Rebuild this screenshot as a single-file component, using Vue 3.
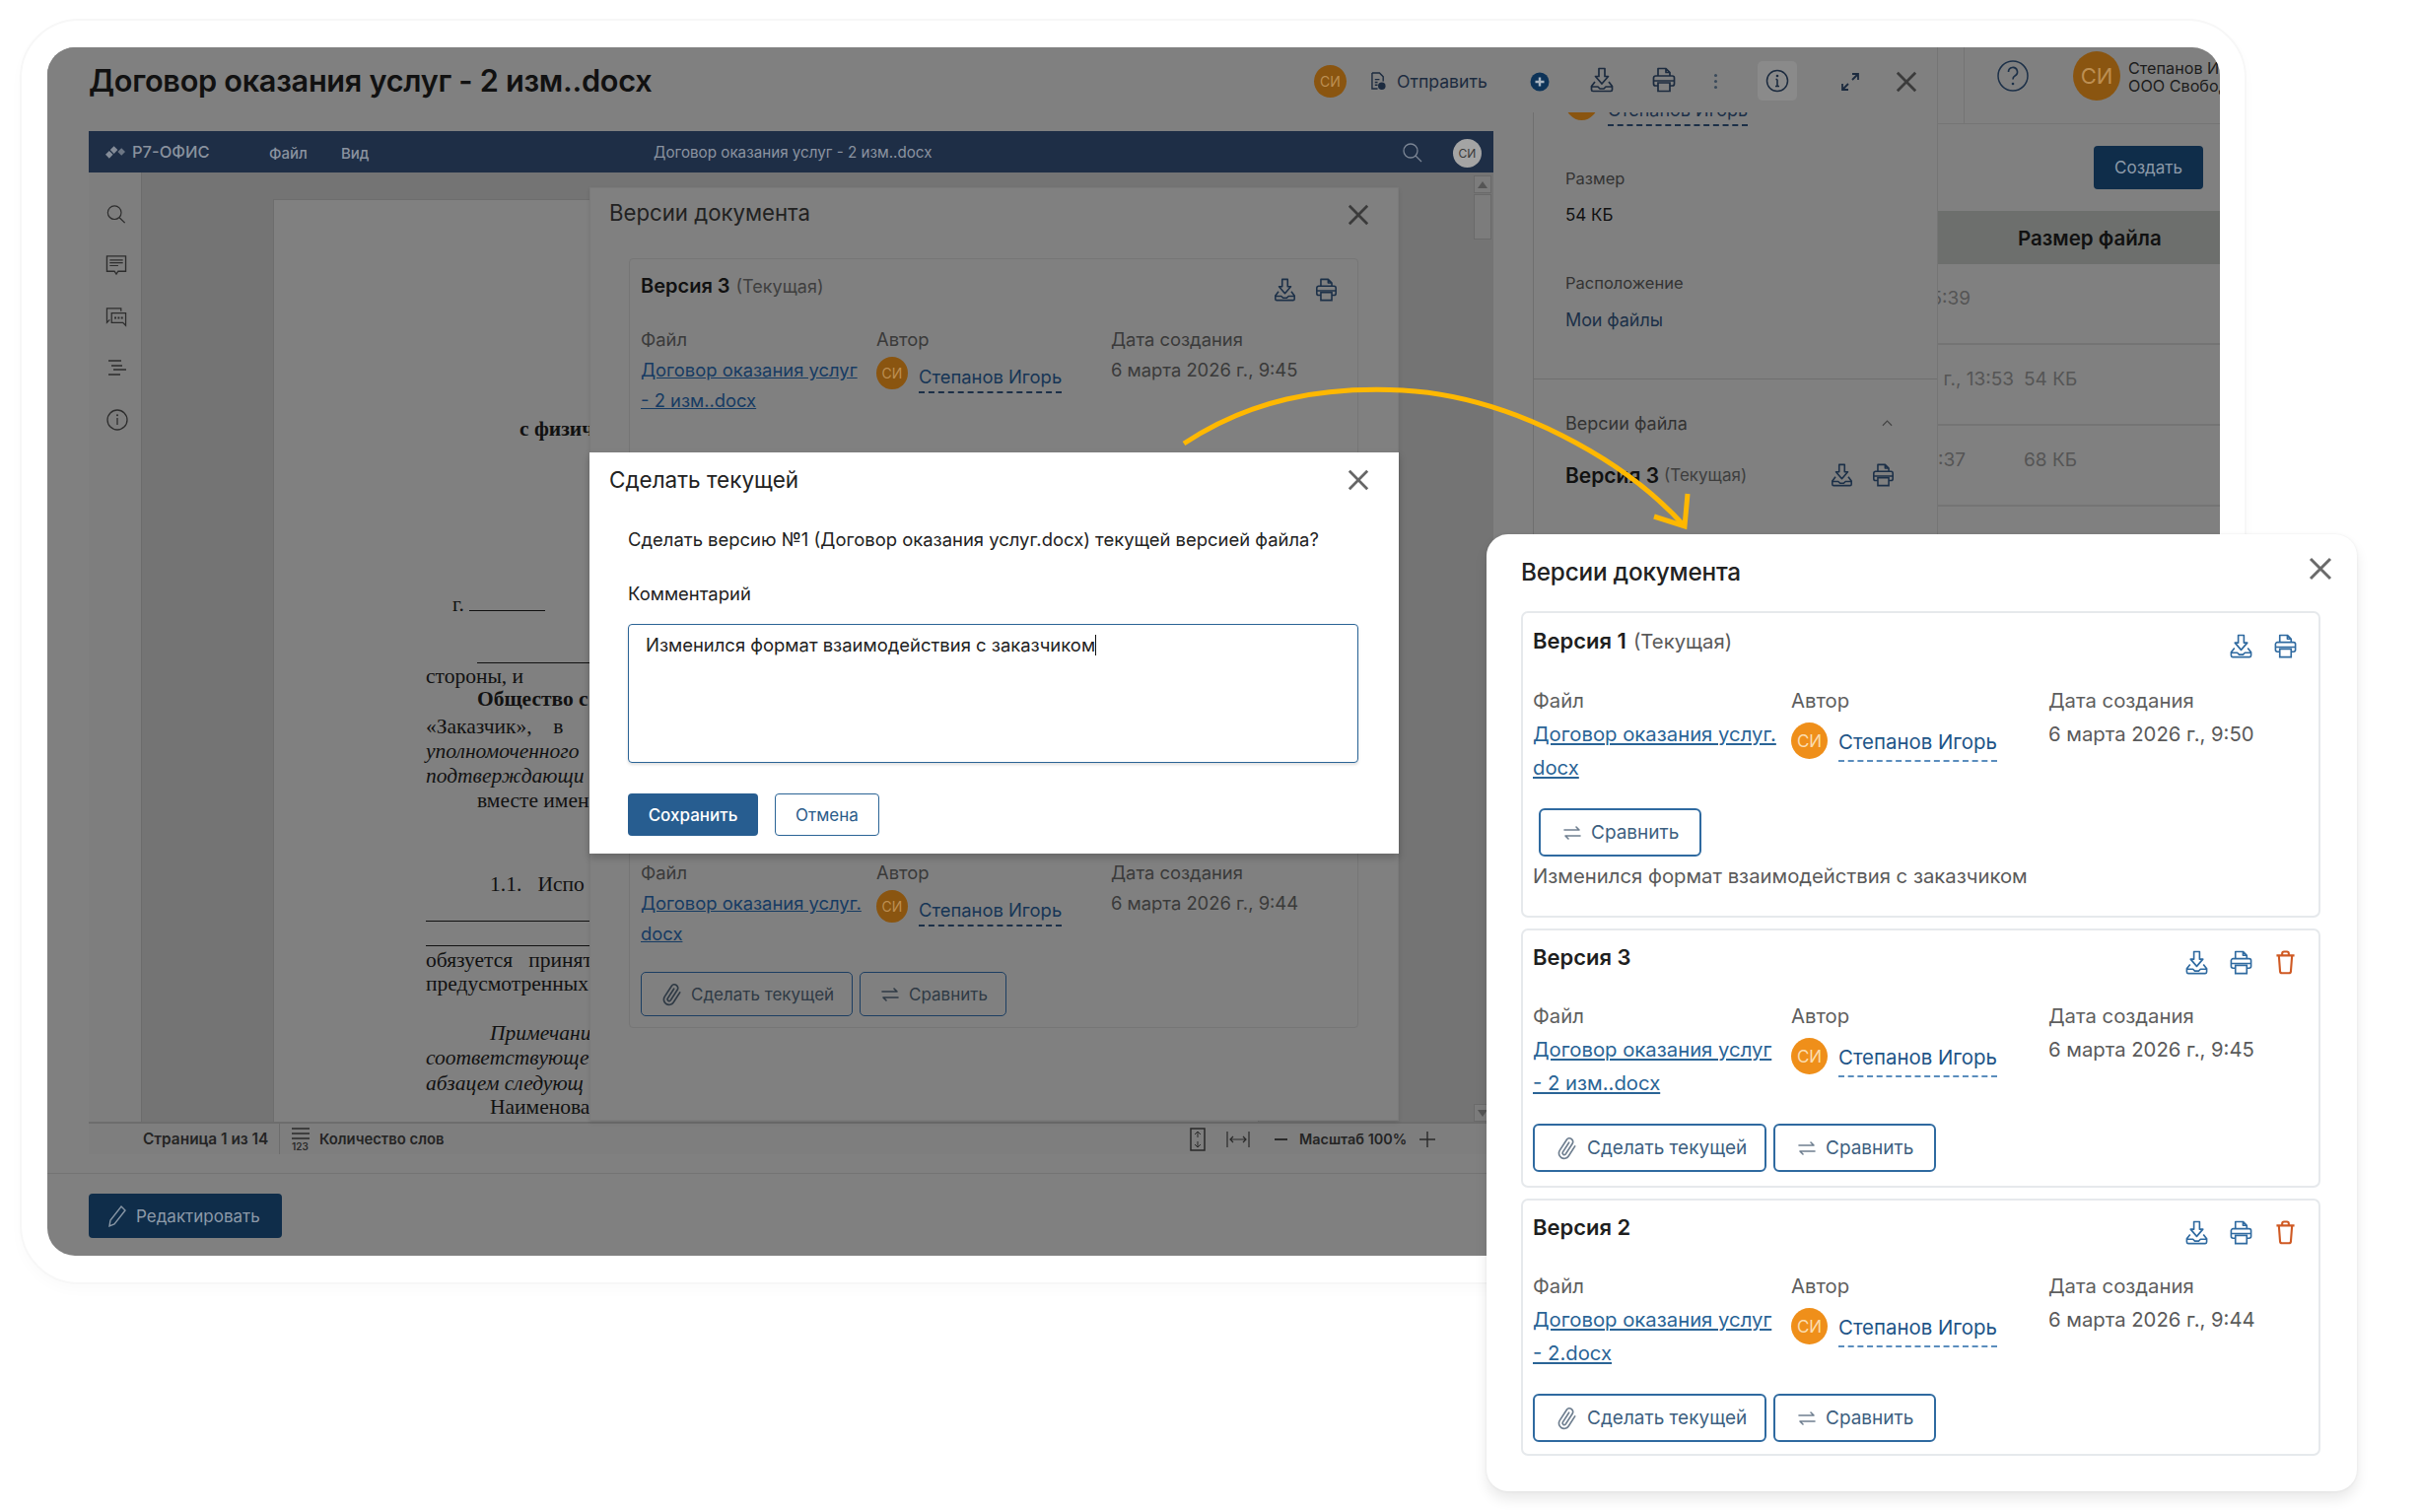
<script setup>
const docLines = [
  { y: 435, x: 527, text: 'с физич', cls: 'b' },
  { y: 613, x: 459, text: 'г. ', rule: 77 },
  { y: 666, x: 484, text: '', rule: 114 },
  { y: 686, x: 432, text: 'стороны, и' },
  { y: 709, x: 484, text: 'Общество с', cls: 'b' },
  { y: 737, x: 432, text: '«Заказчик»,\u00a0\u00a0\u00a0\u00a0в' },
  { y: 762, x: 432, text: 'уполномоченного', cls: 'i' },
  { y: 787, x: 432, text: 'подтверждающи', cls: 'i' },
  { y: 812, x: 484, text: 'вместе имен' },
  { y: 897, x: 497, text: '1.1.\u00a0\u00a0\u00a0Испо' },
  { y: 928, x: 432, text: '', rule: 166 },
  { y: 953, x: 432, text: '', rule: 166 },
  { y: 974, x: 432, text: 'обязуется\u00a0\u00a0\u00a0принять' },
  { y: 998, x: 432, text: 'предусмотренных' },
  { y: 1048, x: 497, text: 'Примечание', cls: 'i' },
  { y: 1073, x: 432, text: 'соответствующе', cls: 'i' },
  { y: 1099, x: 432, text: 'абзацем следующ', cls: 'i' },
  { y: 1123, x: 497, text: 'Наименова' },
].map((l, i, a) => ({
  ...l,
  mt: l.y - (i ? a[i - 1].y : 203 + 12) - (i ? 25 : 0),
  pl: l.x - 278,
}))

const versions = [
  { id: 'Версия 1', cur: true, file: ['Договор оказания услуг.', 'docx'], date: '6 марта 2026 г., 9:50', comment: 'Изменился формат взаимодействия с заказчиком', cls: 'first' },
  { id: 'Версия 3', file: ['Договор оказания услуг', '- 2 изм..docx'], date: '6 марта 2026 г., 9:45', cls: 'second' },
  { id: 'Версия 2', file: ['Договор оказания услуг', '- 2.docx'], date: '6 марта 2026 г., 9:44', cls: 'third' },
]

const rows = [
  { t: '6 марта 2026 г., 15:39', s: '', pr: 54 },
  { t: '6 марта 2026 г., 13:53', s: '54 КБ', pr: 10 },
  { t: '6 марта 2026 г., 11:37', s: '68 КБ', pr: 59 },
]
</script>

<template>
  <div class="canvas">
    <svg class="defs" width="0" height="0" aria-hidden="true">
      <defs>
        <symbol id="i-dl" viewBox="0 0 24 26">
          <path d="M9 1.500h6v8h3.500L12 17 5.500 9.500H9z" fill="none" stroke="currentColor" stroke-width="1.700" stroke-linejoin="round"/>
          <path d="M5 15 1.500 19.500v3.500a1.500 1.500 0 0 0 1.500 1.500h18a1.500 1.500 0 0 0 1.500-1.500v-3.500L19 15M2 20h6l2 2h4l2-2h6" fill="none" stroke="currentColor" stroke-width="1.700" stroke-linejoin="round"/>
        </symbol>
        <symbol id="i-pr" viewBox="0 0 24 26">
          <path d="M6 9V1.500h8l4 4V9M14 1.500v4h4" fill="none" stroke="currentColor" stroke-width="1.700" stroke-linejoin="round"/>
          <path d="M6 19H3.500a2 2 0 0 1-2-2v-6a2 2 0 0 1 2-2h17a2 2 0 0 1 2 2v6a2 2 0 0 1-2 2H18M1.500 14h21" fill="none" stroke="currentColor" stroke-width="1.700"/>
          <path d="M6 16h12v8.500H6z" fill="none" stroke="currentColor" stroke-width="1.700"/>
        </symbol>
        <symbol id="i-tr" viewBox="0 0 22 26">
          <path d="M1.500 5.500h19M7.500 5.500v-2a2 2 0 0 1 2-2h3a2 2 0 0 1 2 2v2M4 5.500l1.300 17a2 2 0 0 0 2 1.800h7.400a2 2 0 0 0 2-1.800l1.300-17" fill="none" stroke="currentColor" stroke-width="2.200" stroke-linejoin="round"/>
        </symbol>
        <symbol id="i-clip" viewBox="0 0 24 24">
          <path d="M20 11.500 11.500 20a5.300 5.300 0 0 1-7.500-7.500l9-9a3.500 3.500 0 0 1 5 5l-9 9a1.800 1.800 0 0 1-2.500-2.500l8.300-8.300" fill="none" stroke="currentColor" stroke-width="1.700" stroke-linecap="round"/>
        </symbol>
        <symbol id="i-sw" viewBox="0 0 20 16">
          <path d="M2 5h15l-3-3M18 11H3l3 3" fill="none" stroke="currentColor" stroke-width="1.600" stroke-linecap="round" stroke-linejoin="round"/>
        </symbol>
        <symbol id="i-x" viewBox="0 0 24 24">
          <path d="M2 2l20 20M22 2 2 22" fill="none" stroke="currentColor" stroke-width="3"/>
        </symbol>
      </defs>
    </svg>

    <div class="frame">
      <div class="window">
        <div class="left">
          <header class="top">
            <h1 class="doc-title">Договор оказания услуг - 2 изм..docx</h1>
            <span class="av av-top">СИ</span>
            <svg class="send-ic" viewBox="0 0 16 20"><path d="M1 1h8l4 4v5M1 1v17h6M4 8h5M4 11h3M4 14h3" fill="none" stroke="#1c2b3f" stroke-width="1.500"/><circle cx="11.500" cy="15" r="4" fill="#1c2b3f"/></svg>
            <span class="send">Отправить</span>
            <span class="plus">
              <svg viewBox="0 0 20 20"><circle cx="10" cy="10" r="9.500" fill="#0d3358"/><path d="M10 5.500v9M5.500 10h9" stroke="#a8b4c0" stroke-width="2.400"/></svg>
            </span>
            <svg class="tico t-dl"><use href="#i-dl"/></svg>
            <svg class="tico t-pr"><use href="#i-pr"/></svg>
            <span class="dots"><i></i><i></i><i></i></span>
            <span class="info-box">
              <svg viewBox="0 0 24 24"><circle cx="12" cy="12" r="10.500" fill="none" stroke="#1c2b3f" stroke-width="1.500"/><path d="M12 10.500v7M10 17.500h4M10.500 10.500H12" stroke="#1c2b3f" stroke-width="1.600" fill="none"/><circle cx="12" cy="7" r="1.300" fill="#1c2b3f"/></svg>
            </span>
            <svg class="expand" viewBox="0 0 20 20"><path d="M12 2h6v6M18 2l-6 6M8 18H2v-6M2 18l6-6" fill="none" stroke="#1c2b3f" stroke-width="1.800"/></svg>
            <svg class="x-top"><use href="#i-x"/></svg>
          </header>

          <div class="body">
            <div class="editor">
              <div class="bar">
                <svg class="logo" viewBox="0 0 22 16"><path d="M5 6l4-4 4 4-4 4zM0 11l4-4 4 4-4 4z" fill="#848c98"/><path d="M13 8l4-4 4 4-4 4z" fill="#6c7684"/></svg>
                <span class="brand">Р7-ОФИС</span>
                <span class="menu m1">Файл</span>
                <span class="menu m2">Вид</span>
                <span class="bar-title">Договор оказания услуг - 2 изм..docx</span>
                <svg class="bar-search" viewBox="0 0 20 20"><circle cx="8" cy="8" r="7" fill="none" stroke="#7b8594" stroke-width="1.300"/><path d="M13 13l6 6" stroke="#7b8594" stroke-width="1.300"/></svg>
                <span class="bar-av">СИ</span>
              </div>
              <div class="work">
                <aside class="side">
                  <svg viewBox="0 0 22 22" class="s1"><circle cx="9" cy="9" r="7.500" fill="none" stroke="#2d2d2d" stroke-width="1.300"/><path d="M14.500 14.500l6 6" stroke="#2d2d2d" stroke-width="1.500"/></svg>
                  <svg viewBox="0 0 22 22" class="s2"><path d="M1 1h20v16h-8l-2 3-2-3H1z" fill="none" stroke="#2d2d2d" stroke-width="1.400"/><path d="M4 5h14M4 8h14M4 11h9" stroke="#2d2d2d" stroke-width="1.300"/></svg>
                  <svg viewBox="0 0 22 22" class="s3"><path d="M1 13V1h15v3M1 13v3l3-3" fill="none" stroke="#2d2d2d" stroke-width="1.300"/><path d="M6 6h15v13l-3-3H6z" fill="none" stroke="#2d2d2d" stroke-width="1.300"/><path d="M9 11h2M12.500 11h2M16 11h2" stroke="#2d2d2d" stroke-width="2"/></svg>
                  <svg viewBox="0 0 20 16" class="s4"><path d="M1 1h13M4 6h11M6 10h13M1 15h12" stroke="#2d2d2d" stroke-width="1.400"/></svg>
                  <svg viewBox="0 0 22 22" class="s5"><circle cx="11" cy="11" r="10" fill="none" stroke="#2d2d2d" stroke-width="1.300"/><path d="M11 9v7" stroke="#2d2d2d" stroke-width="1.300"/><circle cx="11" cy="6.200" r="1" fill="#2d2d2d"/></svg>
                </aside>
                <div class="space">
                  <div class="page">
                    <div v-for="(l, i) in docLines" :key="i" class="line" :class="l.cls" :style="{ marginTop: l.mt + 'px', paddingLeft: l.pl + 'px' }">
                      {{ l.text }}<span v-if="l.rule" class="rule" :style="{ width: l.rule + 'px' }"></span>
                    </div>
                  </div>
                  <div class="scroll">
                    <span class="sb-btn"><i class="up"></i></span>
                    <span class="sb-thumb"></span>
                    <span class="sb-rest"></span>
                    <span class="sb-btn"><i class="down"></i></span>
                  </div>
                </div>
              </div>
              <div class="status">
                <span class="st-page">Страница 1 из 14</span>
                <span class="st-sep"></span>
                <svg class="st-ic" viewBox="0 0 18 24"><path d="M0 1h18M0 6h18M0 11h18" stroke="#2a2a2a" stroke-width="1.500"/><text x="0" y="23" font-size="10" font-family="Inter, sans-serif" fill="#2a2a2a">123</text></svg>
                <span class="st-words">Количество слов</span>
                <svg class="st-fit" viewBox="0 0 16 24"><path d="M1 1h14v22H1z" fill="none" stroke="#2a2a2a" stroke-width="1.500"/><path d="M8 4v6M8 14v6M5 7l3-3 3 3M5 17l3 3 3-3" fill="none" stroke="#2a2a2a"/></svg>
                <svg class="st-w" viewBox="0 0 24 18"><path d="M1 1v16M23 1v16M4 9h16M7 6 4 9l3 3M17 6l3 3-3 3" fill="none" stroke="#2a2a2a" stroke-width="1.200"/></svg>
                <span class="st-minus"></span>
                <span class="st-zoom">Масштаб 100%</span>
                <svg class="st-plus" viewBox="0 0 16 16"><path d="M8 0v16M0 8h16" stroke="#2a2a2a" stroke-width="1.400"/></svg>
              </div>
            </div>

            <aside class="panel">
              <div class="p-owner">
                <span class="av av-owner"></span>
                <span class="p-name">Степанов Игорь</span>
              </div>
              <div class="p-lab">Размер</div>
              <div class="p-val">54 КБ</div>
              <div class="p-lab p-gap">Расположение</div>
              <a class="p-link">Мои файлы</a>
              <div class="p-div"></div>
              <div class="p-ver"><span>Версии файла</span><svg viewBox="0 0 12 8"><path d="M1 7l5-5 5 5" fill="none" stroke="#444" stroke-width="1.300"/></svg></div>
              <div class="p-vhead">
                <b>Версия 3</b><span>(Текущая)</span>
                <svg class="pico pi1"><use href="#i-dl"/></svg>
                <svg class="pico"><use href="#i-pr"/></svg>
              </div>
            </aside>
          </div>
          <footer class="foot">
            <button class="edit">
              <svg viewBox="0 0 20 24"><path d="M14 2l4 4L7 20l-5 2 1-6z" fill="none" stroke="#8896a5" stroke-width="1.400"/></svg>
              Редактировать
            </button>
          </footer>

          <!-- dimmed «Версии документа» dialog -->
          <section class="dlg-dim">
            <div class="dd-head"><span class="dd-title">Версии документа</span><svg class="dd-x"><use href="#i-x"/></svg></div>
            <div class="dd-card">
              <div class="dd-vh">
                <b>Версия 3</b><span>(Текущая)</span>
                <svg class="pico pi1 dd-ico"><use href="#i-dl"/></svg>
                <svg class="pico dd-ico"><use href="#i-pr"/></svg>
              </div>
              <div class="dd-grid">
                <span class="dl">Файл</span><span class="dl">Автор</span><span class="dl">Дата создания</span>
                <a class="df">Договор оказания услуг<br>- 2 изм..docx</a>
                <div class="da"><span class="av av-dim">СИ</span><span class="dn">Степанов Игорь</span></div>
                <span class="dd">6 марта 2026 г., 9:45</span>
              </div>
              <div class="dd-mid"></div>
              <div class="dd-grid">
                <span class="dl">Файл</span><span class="dl">Автор</span><span class="dl">Дата создания</span>
                <a class="df">Договор оказания услуг.<br>docx</a>
                <div class="da"><span class="av av-dim">СИ</span><span class="dn">Степанов Игорь</span></div>
                <span class="dd">6 марта 2026 г., 9:44</span>
              </div>
              <div class="dd-btns">
                <button class="dbtn dbtn-a"><svg class="clip"><use href="#i-clip"/></svg>Сделать текущей</button>
                <button class="dbtn dbtn-b"><svg class="sw"><use href="#i-sw"/></svg>Сравнить</button>
              </div>
            </div>
          </section>

          <!-- active confirmation dialog -->
          <section class="dlg">
            <div class="dlg-head"><span>Сделать текущей</span><svg class="dd-x"><use href="#i-x"/></svg></div>
            <div class="dlg-body">
              <p class="dlg-q">Сделать версию №1 (Договор оказания услуг.docx) текущей версией файла?</p>
              <div class="dlg-lab">Комментарий</div>
              <div class="ta">Изменился формат взаимодействия с заказчиком<i class="caret"></i></div>
              <div class="dlg-btns">
                <button class="save">Сохранить</button>
                <button class="cancel">Отмена</button>
              </div>
            </div>
          </section>
        </div>

        <div class="right">
          <div class="r-top">
            <span class="r-sep"></span>
            <svg class="help" viewBox="0 0 32 32"><circle cx="16" cy="16" r="15" fill="none" stroke="#1c3048" stroke-width="1.500"/><path d="M11.500 12a4.500 4.500 0 1 1 6.500 4c-1.500.8-2 1.600-2 3.500" fill="none" stroke="#1c3048" stroke-width="1.700"/><circle cx="16" cy="24" r="1.300" fill="#1c3048"/></svg>
            <span class="av av-user">СИ</span>
            <div class="user"><span>Степанов Игорь</span><span>ООО Свобода</span></div>
          </div>
          <div class="r-act"><button class="create">Создать</button></div>
          <div class="r-th"><span>Размер файла</span></div>
          <div v-for="(r, i) in rows" :key="i" class="r-row">
            <span class="r-t" :style="{ paddingRight: r.pr + 'px' }">{{ r.t }}</span>
            <span class="r-s">{{ r.s }}</span>
          </div>
        </div>
      </div>
    </div>

    <svg class="arrow" viewBox="0 0 600 170" fill="none">
      <path d="M3 59C70 15 140 1 225 5C335 11 450 75 511 143" stroke="#ffb800" stroke-width="5"/>
      <path d="M514 110 511 143 480 133" stroke="#ffb800" stroke-width="5"/>
    </svg>

    <section class="pop">
      <div class="pop-head">
        <h2>Версии документа</h2>
        <svg class="pop-x"><use href="#i-x"/></svg>
      </div>
      <div class="cards">
        <article v-for="v in versions" :key="v.id" class="card" :class="v.cls">
          <div class="c-head">
            <b>{{ v.id }}</b><span v-if="v.cur" class="cur">(Текущая)</span>
            <div class="c-ics">
              <svg class="ci"><use href="#i-dl"/></svg>
              <svg class="ci"><use href="#i-pr"/></svg>
              <svg v-if="!v.cur" class="ci tr"><use href="#i-tr"/></svg>
            </div>
          </div>
          <div class="c-grid">
            <span class="lab">Файл</span><span class="lab">Автор</span><span class="lab">Дата создания</span>
            <a class="fl">{{ v.file[0] }}<br>{{ v.file[1] }}</a>
            <div class="au"><span class="av av-pop">СИ</span><span class="nm">Степанов Игорь</span></div>
            <span class="dt">{{ v.date }}</span>
          </div>
          <div class="c-btns">
            <button v-if="!v.cur" class="btn b-make"><svg class="clip"><use href="#i-clip"/></svg>Сделать текущей</button>
            <button class="btn b-cmp"><svg class="sw"><use href="#i-sw"/></svg>Сравнить</button>
          </div>
          <p v-if="v.comment" class="cm">{{ v.comment }}</p>
        </article>
      </div>
    </section>
  </div>
</template>

<style scoped>
* { box-sizing: border-box; }
.defs { position: absolute; }
.canvas { position: relative; width: 2456px; height: 1534px; background: #fff; overflow: hidden; font-family: Inter, "Noto Sans", sans-serif; color: #222; }
.frame { position: absolute; left: 20px; top: 19px; width: 2259px; height: 1284px; padding: 28px 27px 28px 28px; border-radius: 60px; background: #fff; border: 2px solid #f7f7f7; box-shadow: 0 6px 14px rgba(0,0,0,.02); }
.window { display: flex; border-radius: 28px; background: #808080; overflow: hidden; margin: -1px 0 0 -2px; width: 2204px; height: 1226px; }
.left { position: relative; flex: 0 0 1917px; display: flex; flex-direction: column; }
.top { height: 66px; flex: none; display: flex; align-items: center; padding-left: 42px; position: relative; z-index: 1; background: #808080; }
.doc-title { margin: 0; font-size: 30.700px; font-weight: 600; color: #111; letter-spacing: -.3px; width: 1243px; white-space: nowrap; }
.av { display: inline-flex; align-items: center; justify-content: center; border-radius: 50%; background: #8a5510; color: #bd8f52; flex: none; }
.av-top { width: 33px; height: 33px; font-size: 14px; margin-top: 3px; }
.send-ic { width: 15px; height: 19px; margin: 3px 0 0 25px; }
.send { font-size: 17.600px; color: #1c2b3f; margin: 3px 0 0 11px; width: 135px; }
.plus { width: 20px; height: 20px; margin-top: 3px; display: flex; }
.plus svg { width: 20px; height: 20px; }
.tico { width: 24px; height: 26px; color: #1c2b3f; }
.t-dl { margin-left: 41px; }
.t-pr { margin-left: 39px; }
.dots { display: flex; flex-direction: column; gap: 3px; margin: 2px 0 0 39px; width: 3px; }
.dots i { width: 3px; height: 3px; background: #3a4a5a; border-radius: 50%; }
.info-box { width: 40px; height: 40px; margin: 2px 0 0 41px; border-radius: 5px; background: #8a8a8a; display: flex; align-items: center; justify-content: center; }
.info-box svg { width: 24px; height: 24px; }
.expand { width: 20px; height: 20px; margin: 3px 0 0 44px; }
.x-top { width: 22px; height: 22px; margin: 3px 0 0 36px; color: #3b3b3b; }

.body { flex: none; height: 1077px; display: flex; border-bottom: 1px solid #747474; }
.editor { flex: none; width: 1425px; height: 1038px; margin: 19px 0 0 42px; display: flex; flex-direction: column; }
.bar { height: 42px; flex: none; background: #1e2e46; display: flex; align-items: center; position: relative; color: #8b93a0; font-size: 15px; }
.logo { width: 21px; height: 16px; margin-left: 17px; }
.brand { font-size: 16.500px; font-weight: 500; margin-left: 6px; color: #8a929e; }
.menu { position: absolute; top: 13px; font-size: 15px; font-weight: 500; }
.m1 { left: 183px; }
.m2 { left: 256px; }
.bar-title { position: absolute; left: 573px; top: 12px; font-size: 15.200px; }
.bar-search { position: absolute; left: 1333px; top: 12px; width: 20px; height: 20px; }
.bar-av { position: absolute; left: 1384px; top: 8px; width: 29px; height: 29px; border-radius: 50%; background: #a4a4a4; color: #3a3a3a; display: flex; align-items: center; justify-content: center; font-size: 12px; }
.work { flex: 1; min-height: 0; display: flex; overflow: hidden; }
.side { flex: none; width: 54px; border-right: 1px solid #6c6c6c; background: #7e7e7e; padding: 32px 0 0 17px; display: flex; flex-direction: column; align-items: flex-start; }
.side svg { display: block; }
.s1 { width: 20px; height: 21px; margin-left: 1px; }
.s2 { width: 22px; height: 21px; margin-top: 31px; }
.s3 { width: 22px; height: 21px; margin-top: 32px; }
.s4 { width: 20px; height: 16px; margin: 32px 0 0 2px; }
.s5 { width: 22px; height: 22px; margin: 34px 0 0 1px; }
.space { flex: 1; display: flex; justify-content: space-between; background: #747474; padding-left: 133px; min-width: 0; }
.page { width: 1000px; margin-top: 27px; background: #808080; border: 1px solid #6d6d6d; border-bottom: 0; font-family: "Liberation Serif", serif; font-size: 21.500px; color: #111; white-space: nowrap; overflow: hidden; }
.line { height: 25px; line-height: 25px; }
.line.b { font-weight: 700; }
.line.i { font-style: italic; }
.rule { display: inline-block; height: 14px; border-bottom: 1px solid #111; vertical-align: baseline; }
.scroll { flex: none; width: 18px; margin-right: 2px; padding-top: 3px; display: flex; flex-direction: column; gap: 1px; }
.scroll span { display: block; border: 1px solid #6a6a6a; background: #7c7c7c; }
.scroll .sb-btn { height: 18px; flex: none; display: flex; align-items: center; justify-content: center; }
.scroll .sb-thumb { height: 46px; flex: none; }
.scroll .sb-rest { flex: 1; border: 0; background: none; }
.up, .down { width: 0; height: 0; border-left: 5px solid transparent; border-right: 5px solid transparent; }
.up { border-bottom: 7px solid #555; }
.down { border-top: 7px solid #555; }
.status { height: 33px; flex: none; background: #7e7e7e; border-top: 2px solid #6d6d6d; display: flex; align-items: center; font-size: 14.800px; font-weight: 600; color: #242424; position: relative; }
.st-page { margin-left: 55px; width: 138px; font-size: 15.400px; white-space: nowrap; }
.st-sep { width: 1px; height: 31px; background: #6d6d6d; }
.st-ic { width: 18px; height: 24px; margin-left: 12px; }
.st-words { margin-left: 10px; width: 883px; white-space: nowrap; }
.st-fit { width: 16px; height: 24px; }
.st-w { width: 24px; height: 18px; margin-left: 21px; }
.st-minus { width: 13px; height: 2px; background: #2a2a2a; margin-left: 25px; }
.st-zoom { margin-left: 12px; width: 122px; font-size: 14.400px; white-space: nowrap; }
.st-plus { width: 16px; height: 16px; }

.panel { flex: none; width: 410px; margin-left: 40px; border-left: 1px solid #6f6f6f; padding-left: 32px; overflow: hidden; font-size: 16.500px; color: #1f1f1f; }
.p-owner { display: flex; height: 12px; position: relative; }
.av-owner { position: absolute; left: 0; top: -27px; width: 33px; height: 35px; }
.p-name { position: absolute; left: 43px; top: -13px; color: #1c3048; font-size: 18px; border-bottom: 2px dashed #1c3048; padding-bottom: 4px; white-space: nowrap; }
.p-lab { margin-top: 43px; line-height: 24px; color: #333; }
.p-val { margin-top: 13px; line-height: 24px; color: #111; font-size: 17px; }
.p-gap { margin-top: 45px; }
.p-link { display: block; margin-top: 14px; line-height: 24px; color: #1c3048; font-size: 18px; letter-spacing: -.1px; }
.p-div { margin: 47px 0 0 -32px; height: 1px; width: 410px; background: #6f6f6f; }
.p-ver { display: flex; justify-content: space-between; align-items: center; margin-top: 32px; padding-right: 45px; height: 24px; color: #333; font-size: 18px; }
.p-ver svg { width: 11px; height: 8px; }
.p-vhead { display: flex; align-items: center; margin-top: 29px; height: 24px; position: relative; color: #3e3e3e; font-size: 17px; }
.p-vhead b { font-size: 21px; font-weight: 600; color: #111; margin-right: 5px; }
.pico { width: 23px; height: 24px; color: #1c3048; flex: none; }
.pi1 { margin-left: auto; margin-right: 19px; }
.p-vhead .pico:last-child { margin-right: 43px; }

.foot { padding: 20px 0 0 42px; }
.edit { width: 196px; height: 45px; border: 0; border-radius: 4px; background: #0f2d4a; color: #8d9aa9; font: 17px Inter, sans-serif; display: flex; align-items: center; padding: 0 0 0 19px; gap: 9px; }
.edit svg { width: 20px; height: 24px; }

.dlg-dim { position: absolute; left: 550px; top: 142px; width: 821px; height: 947px; background: #808080; box-shadow: 0 2px 4px rgba(0,0,0,.1); border: 1px solid #7a7a7a; padding: 0 40px 0 39px; color: #333; }
.dd-head { height: 54px; margin: 0 -11px 17px -20px; display: flex; align-items: center; justify-content: space-between; font-size: 22.200px; color: #222; }
.dd-title { margin-top: -5px; }
.dd-x { width: 22px; height: 22px; color: #3b3b3b; }
.dd-card { height: 781px; border: 1px solid #767676; border-radius: 4px; padding: 0 11px; }
.dd-vh { height: 54px; display: flex; align-items: center; font-size: 18px; color: #3f3f3f; padding-right: 9px; }
.dd-vh b { font-size: 20px; font-weight: 600; color: #111; margin-right: 6px; }
.dd-ico { color: #1c3048; margin-top: 7px; }
.dd-vh .pico:last-child { margin-right: 0; }
.dd-grid { display: grid; grid-template-columns: 239px 238px 1fr; font-size: 18.400px; line-height: 31px; margin-top: 12px; white-space: nowrap; }
.dl { color: #3a3a3a; }
.df { color: #163b63; text-decoration: underline; grid-row: 2; }
.da { display: flex; align-items: flex-start; grid-row: 2; }
.av-dim { width: 32px; height: 33px; font-size: 14px; margin-top: 2px; }
.dn { margin: 9px 0 0 11px; color: #163556; border-bottom: 2px dashed #1c3048; line-height: 26px; height: 30px; }
.dd { color: #3a3a3a; grid-row: 2; }
.dd-mid { height: 436px; }
.dd-btns { display: flex; gap: 7px; margin-top: 23px; }
.dbtn { height: 45px; background: none; border: 1.500px solid #1c3e62; border-radius: 5px; color: #2f3a45; font: 17px Inter, sans-serif; display: flex; align-items: center; padding: 0; }
.dbtn svg { color: #2f3a45; }
.dbtn-a { width: 215px; padding-left: 19px; gap: 7px; }
.dbtn-b { width: 149px; padding-left: 20px; gap: 9px; }

.dlg { position: absolute; left: 550px; top: 411px; width: 821px; height: 407px; background: #fff; box-shadow: 0 4px 8px rgba(0,0,0,.2); color: #222; }
.dlg-head { height: 55px; display: flex; align-items: center; justify-content: space-between; padding: 0 30px 0 20px; font-size: 22.500px; color: #222; }
.dlg-head .dd-x { color: #666; }
.dlg-body { padding: 0 39px 0 39px; }
.dlg-q { margin: 20px 0 0; line-height: 26px; font-size: 18.450px; white-space: nowrap; }
.dlg-lab { margin-top: 29px; line-height: 26px; font-size: 18.450px; }
.ta { margin-top: 18px; width: 741px; height: 141px; border: 1.500px solid #2b6496; border-radius: 4px; padding: 7px 17px; font-size: 18.450px; line-height: 26px; box-shadow: 0 2px 3px rgba(0,0,0,.12); white-space: nowrap; }
.caret { display: inline-block; width: 1px; height: 21px; background: #111; vertical-align: -4px; }
.dlg-btns { display: flex; gap: 17px; margin-top: 31px; }
.save { width: 132px; height: 43px; border: 0; border-radius: 4px; background: #275d90; color: #fff; font: 500 17px Inter, sans-serif; }
.cancel { width: 106px; height: 43px; border: 1.500px solid #2b6496; border-radius: 4px; background: #fff; color: #2b5c8a; font: 17px Inter, sans-serif; }

.right { flex: 1; min-width: 0; overflow: hidden; border-left: 1px solid #757575; white-space: nowrap; }
.r-top { height: 78px; display: flex; align-items: center; border-bottom: 1px solid #757575; padding-bottom: 20px; }
.r-sep { width: 1px; height: 78px; background: #757575; margin-left: 26px; flex: none; align-self: flex-start; }
.help { width: 32px; height: 32px; margin-left: 33px; flex: none; }
.av-user { width: 48px; height: 50px; font-size: 22px; margin-left: 45px; }
.user { display: flex; flex-direction: column; flex: none; margin: 2px 0 0 8px; font-size: 16.200px; line-height: 18px; color: #1c1c1c; }
.r-act { height: 88px; display: flex; justify-content: flex-end; padding: 22px 17px 0 0; }
.create { width: 111px; height: 44px; border: 0; border-radius: 4px; background: #0f2d4a; color: #8d9aa9; font: 17px Inter, sans-serif; }
.r-th { height: 54px; background: #6d6f6d; display: flex; align-items: center; padding-left: 81px; font-size: 20.500px; font-weight: 600; color: #111; }
.r-row { height: 82px; display: flex; align-items: center; border-bottom: 2px solid #747474; font-size: 19px; color: #555; padding-bottom: 12px; }
.r-t { flex: none; width: 87px; display: flex; justify-content: flex-end; overflow: hidden; }

.arrow { position: absolute; left: 1198px; top: 391px; width: 600px; height: 170px; }

.pop { position: absolute; left: 1508px; top: 542px; width: 883px; height: 971px; background: #fff; border-radius: 22px; padding: 0 37px 0 35px; box-shadow: 0 8px 14px rgba(0,0,0,.09), 0 0 3px rgba(0,0,0,.07); }
.pop-head { height: 78px; display: flex; align-items: center; justify-content: space-between; }
.pop-head h2 { margin: -3px 0 0; font-size: 24.300px; font-weight: 500; color: #222; letter-spacing: -.2px; }
.pop-x { width: 24px; height: 24px; color: #6a6a6a; margin: -8px -12px 0 0; }
.cards { display: flex; flex-direction: column; gap: 11px; }
.card { border: 2px solid #e6e9ec; border-radius: 7px; padding: 8px 11px 0 10px; }
.first { height: 311px; }
.second { height: 263px; padding-top: 7px; }
.third { height: 261px; padding-top: 7px; }
.c-head { height: 40px; display: flex; align-items: center; color: #5a5a5a; font-size: 20.300px; }
.c-head b { font-size: 22px; font-weight: 600; color: #1f1f1f; margin-right: 7px; }
.c-ics { margin-left: auto; display: flex; gap: 20px; margin-top: 10px; margin-right: 10px; }
.ci { width: 25px; height: 25px; color: #2f6aa0; flex: none; }
.ci.tr { width: 21px; color: #cf5a24; margin-left: 2px; margin-right: 2px; }
.c-grid { display: grid; grid-template-columns: 262px 261px 1fr; margin-top: 24px; font-size: 20.300px; line-height: 34px; white-space: nowrap; }
.second .c-grid, .third .c-grid { margin-top: 23px; }
.lab { color: #5e5e5e; }
.fl { color: #2a6496; text-decoration: underline; grid-row: 2; }
.au { display: flex; align-items: flex-start; grid-row: 2; }
.av-pop { width: 37px; height: 37px; background: #ef8f1a; color: #fbdcae; font-size: 17px; margin-top: 5px; }
.nm { margin: 11px 0 0 11px; font-size: 20.400px; line-height: 28px; height: 34px; color: #1d5487; border-bottom: 2px dashed #5a8dbd; }
.dt { color: #5a5a5a; grid-row: 2; }
.c-btns { display: flex; gap: 7px; margin-top: 24px; }
.first .c-btns { margin-top: 24px; padding-left: 6px; }
.btn { height: 49px; background: #fff; border: 2px solid #2f6aa0; border-radius: 6px; color: #3d5f80; font: 19px Inter, sans-serif; display: flex; align-items: center; padding: 0; }
.b-make { width: 237px; padding-left: 21px; gap: 8px; }
.b-cmp { width: 165px; padding-left: 22px; gap: 9px; }
.clip { width: 24px; height: 24px; color: #6f7f90; transform: rotate(-12deg); flex: none; }
.sw { width: 20px; height: 16px; color: #6f7f90; flex: none; }
.cm { margin: 3px 0 0; font-size: 20.300px; line-height: 34px; color: #5a5a5a; white-space: nowrap; }
</style>
